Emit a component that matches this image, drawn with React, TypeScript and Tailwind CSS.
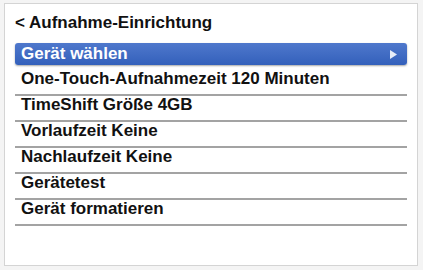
export default function App() {
  const items = [
    "One-Touch-Aufnahmezeit 120 Minuten",
    "TimeShift Größe 4GB",
    "Vorlaufzeit Keine",
    "Nachlaufzeit Keine",
    "Gerätetest",
    "Gerät formatieren",
  ];

  return (
    <div
      className="w-[423px] h-[270px] bg-[#f4f4f4] pt-[3px] pl-[4px]"
      style={{ fontFamily: '"Liberation Sans", Arial, sans-serif' }}
    >
      <div className="w-[414px] h-[263px] bg-white border border-[#d4d4d4] pt-[10px] px-[10px]">
        <div className="text-[17px] leading-[18px] font-bold text-[#111]">
          &lt; Aufnahme-Einrichtung
        </div>

        <div className="mt-[11px] h-[22px] rounded-[3px] bg-gradient-to-b from-[#4f78cc] to-[#3360bb] shadow-[0_1px_2px_rgba(0,0,0,0.35)] flex items-center justify-between pl-[6px] pr-[10px]">
          <span className="text-white text-[17px] leading-[18px] font-bold">Gerät wählen</span>
          <svg width="7" height="9" viewBox="0 0 7 9">
            <path d="M0 0 L7 4.5 L0 9 Z" fill="#e6ecf8" />
          </svg>
        </div>

        <div className="mt-[5px]">
          {items.map((item) => (
            <div
              key={item}
              className="h-[26px] border-b-2 border-[#a3a3a3] pl-[6px] text-[17px] leading-[18px] font-bold text-[#111]"
            >
              {item}
            </div>
          ))}
        </div>
      </div>
    </div>
  );
}
